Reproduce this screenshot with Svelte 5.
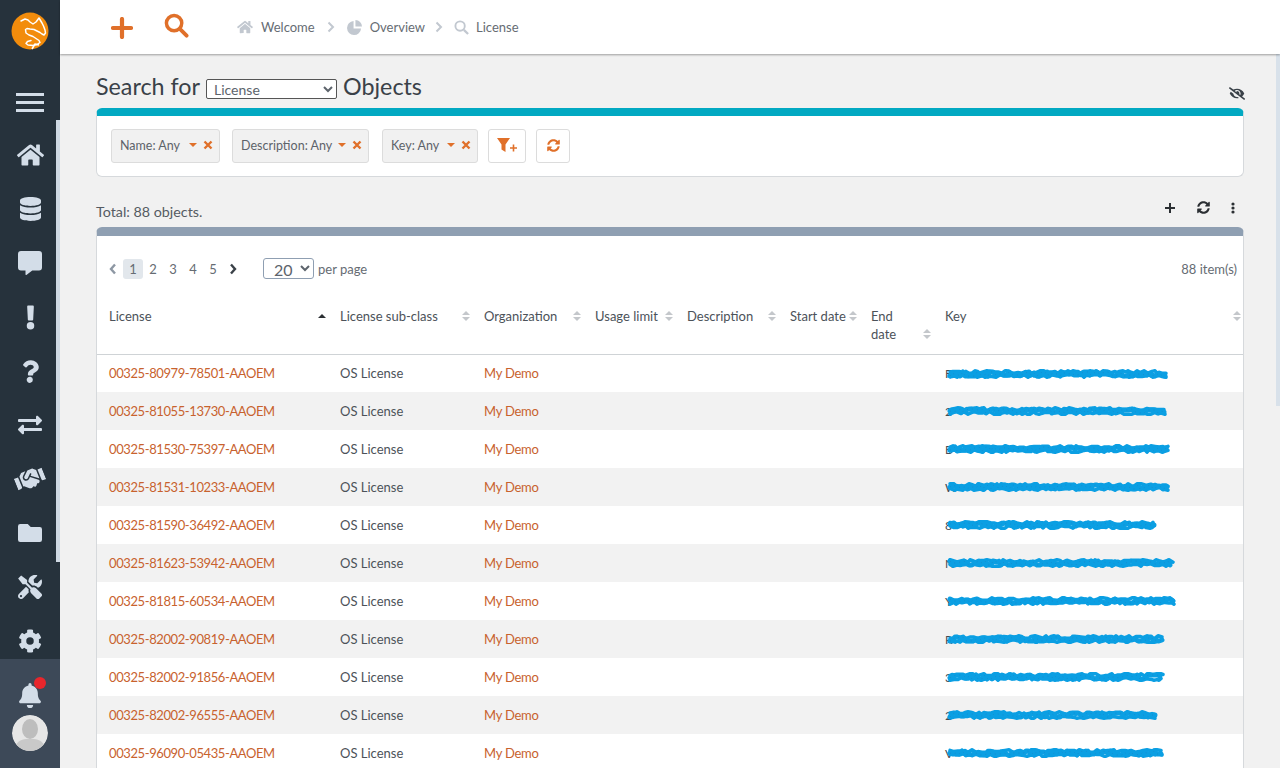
<script>
  const ids = ['00325-80979-78501','00325-81055-13730','00325-81530-75397','00325-81531-10233','00325-81590-36492','00325-81623-53942','00325-81815-60534','00325-82002-90819','00325-82002-91856','00325-82002-96555','00325-96090-05435'];
  const ends = [224,224,227,226,212,231,234,220,221,213,221];
  const firsts = ['F','2','B','W','8','N','Y','R','3','2','V'];
  function scribble(w, seed, base, amp) {
    let s = seed * 7919 + 13, pts = [], x = 5;
    while (x < w - 2) {
      s = (s * 1103515245 + 12345) & 0x7fffffff;
      const y = base + ((s >> 8) % 5 - 2) * amp;
      pts.push(x.toFixed(1) + ',' + y.toFixed(1));
      x += 2 + (s >> 16) % 3;
    }
    return pts.join(' ');
  }
  const rows = ids.map((id, i) => ({
    name: id + '-AAOEM',
    first: firsts[i],
    w: ends[i],
    a: scribble(ends[i], i + 1, 7, 0.6),
    b: scribble(ends[i], i + 31, 11, 0.6),
    c: scribble(ends[i], i + 61, 9, 1)
  }));
  const columns = [
    { label: 'License', sorted: true },
    { label: 'License sub-class' },
    { label: 'Organization' },
    { label: 'Usage limit' },
    { label: 'Description' },
    { label: 'Start date' },
    { label: 'End date' },
    { label: 'Key' }
  ];
</script>

<div class="page">
  <aside class="side">
    <div class="logo">
      <svg viewBox="0 0 38 38" width="38" height="38">
        <circle cx="19" cy="19" r="18.500" fill="#f28c0c" />
        <path d="M10 9 14 7l3 1 2 2 3 2 3-2 3-4 3 5 1.500 3 1.500 4 .5 3-1.500 2-2-1-2-1.500-3-1.500-3-1.500-4-.5-3-.5-1.500 1 .5 3.500 3 2 4 1.500 3 2 3 2 1 2-3 2-4 1-5-.5-2-1.500 1.500-2 3.500-1" fill="none" stroke="#fff" stroke-width="1.500" stroke-linejoin="round" stroke-linecap="round" />
        <path d="m21 37 3-5 4 1" fill="none" stroke="#fff" stroke-width="1.500" stroke-linejoin="round" />
      </svg>
    </div>
    <button class="burger" aria-label="Menu"><span></span><span></span><span></span></button>
    <nav class="nav">
      <svg viewBox="0 0 576 512" width="27" height="24"><path d="M280 148 96 300v164a16 16 0 0 0 16 16l112-.3a16 16 0 0 0 16-16V368a16 16 0 0 1 16-16h64a16 16 0 0 1 16 16v96a16 16 0 0 0 16 16l112 .3a16 16 0 0 0 16-16V300L296 148a12 12 0 0 0-16 0zM572 251l-84-69V44a12 12 0 0 0-12-12h-56a12 12 0 0 0-12 12v72l-89-74a48 48 0 0 0-61 0L4 251a12 12 0 0 0-2 17l26 31a12 12 0 0 0 17 2L280 107a12 12 0 0 1 16 0l235 194a12 12 0 0 0 17-2l26-31a12 12 0 0 0-2-17z"/></svg>
      <svg viewBox="0 0 448 512" width="21" height="24"><path d="M448 73v46c0 40-100 73-224 73S0 159 0 119V73C0 33 100 0 224 0s224 33 224 73zm0 103v103c0 40-100 73-224 73S0 319 0 279V176c48 33 136 49 224 49s176-16 224-49zm0 160v103c0 40-100 73-224 73S0 479 0 439V336c48 33 136 49 224 49s176-16 224-49z"/></svg>
      <svg viewBox="0 0 512 512" width="24" height="24"><path d="M448 0H64A64 64 0 0 0 0 64v288a64 64 0 0 0 64 64h96v84c0 10 11 16 19 10l125-94h144a64 64 0 0 0 64-64V64a64 64 0 0 0-64-64z"/></svg>
      <svg viewBox="0 0 192 512" width="9" height="25"><path d="M176 432a80 80 0 1 1-160 0 80 80 0 0 1 160 0zM25 25l14 272c1 13 11 23 24 23h66c13 0 23-10 24-23l14-272c1-14-10-25-24-25H49C35 0 24 11 25 25z"/></svg>
      <svg viewBox="0 0 384 512" width="17" height="23"><path d="M202 0C122 0 70 33 29 92c-7 11-5 26 5 34l43 33c11 8 26 6 34-4 25-32 44-50 84-50 31 0 70 20 70 50 0 23-19 34-49 51-36 20-83 45-83 107v10c0 13 11 24 24 24h72c13 0 24-11 24-24v-6c0-43 126-45 126-162C379 67 288 0 202 0zm-10 376a70 70 0 1 0 0 136 70 70 0 0 0 0-136z"/></svg>
      <svg viewBox="0 0 512 512" width="24" height="24"><path d="M0 168v-16c0-13 11-24 24-24h360V80c0-21 26-32 41-17l80 80c9 9 9 25 0 34l-80 80c-15 15-41 4-41-17v-48H24c-13 0-24-11-24-24zm488 152H128v-48c0-21-26-32-41-17L7 335c-9 9-9 25 0 34l80 80c15 15 41 4 41-17v-48h360c13 0 24-11 24-24v-16c0-13-11-24-24-24z"/></svg>
      <svg class="hands" viewBox="0 0 640 512" width="30" height="24"><path d="M434.700 64h-85.900c-8 0-15.700 3-21.600 8.400l-98.300 90c-.1.1-.2.3-.3.4-16.600 15.600-16.300 40.500-2.100 56 12.700 13.900 39.400 17.600 56.100 2.700.1-.1.3-.1.4-.2l79.900-73.200c6.500-5.900 16.700-5.500 22.600 1 6 6.500 5.500 16.600-1 22.600l-26.100 23.900L504 313.800c2.900 2.400 5.500 5 7.900 7.700V128l-54.600-54.600c-5.900-6-14.100-9.400-22.600-9.400zM544 128.200v223.900c0 17.700 14.300 32 32 32h64V128.200h-96zM0 384h64c17.700 0 32-14.300 32-32V128.200H0V384zm483.900-45.300L334.600 217.500l-30 27.500c-29.700 27.100-75.200 24.500-101.700-4.400-26.900-29.400-24.800-74.900 4.400-101.700L289.100 64h-83.800c-8.500 0-16.600 3.400-22.600 9.400L128 128v223.900h18.300l90.500 81.900c27.400 22.300 67.700 18.100 90-9.300l.2-.2 17.900 15.500c15.900 13 39.400 10.500 52.300-5.400l31.400-38.600 5.400 4.400c13.700 11.100 33.900 9.100 45-4.700l9.500-11.700c11.200-13.800 9.100-33.900-4.600-45.100z"/></svg>
      <svg viewBox="0 0 512 512" width="24" height="24"><path d="M464 128H272l-64-64H48A48 48 0 0 0 0 112v288a48 48 0 0 0 48 48h416a48 48 0 0 0 48-48V176a48 48 0 0 0-48-48z"/></svg>
      <svg viewBox="0 0 512 512" width="24" height="24"><path d="M502 402 385 285c-23-23-57-28-85-14L194 165V104L67 8 3 72l96 127h62l106 106c-14 28-9 62 14 85l117 117c15 15 38 15 52 0l52-52c14-15 14-38 0-53zM332 224c28 0 55 11 75 31l19 19c16-7 31-16 44-29 37-37 50-90 37-138-2-9-14-12-21-5l-74 74-68-11-11-68 74-74c7-7 3-19-6-21-48-13-101 0-138 37-29 29-42 66-41 104l82 82c9-2 19-1 28-1zm-104 82-57-56L18 403c-24 24-24 63 0 90s66 25 90 1l124-124c-8-20-10-42-4-64zM64 472a24 24 0 1 1 0-48 24 24 0 0 1 0 48z"/></svg>
      <svg viewBox="0 0 512 512" width="24" height="24"><path d="m487 316-42-25c4-23 4-47 0-70l42-25c5-3 7-9 5-14-11-35-30-67-54-93-4-4-10-5-15-3l-42 25c-18-15-38-27-60-35V27c0-5-4-10-9-11-37-8-74-8-108 0-5 1-9 6-9 11v49c-22 8-42 20-60 35L93 86c-5-3-11-2-15 3-24 26-43 58-54 93-2 5 0 11 5 14l42 25c-4 23-4 47 0 70l-42 25c-5 3-7 9-5 14 11 35 30 67 54 93 4 4 10 5 15 3l42-25c18 15 38 27 60 35v49c0 5 4 10 9 11 37 8 74 8 108 0 5-1 9-6 9-11v-49c22-8 42-20 60-35l42 25c5 3 11 2 15-3 24-26 43-58 54-93 2-5 0-11-5-14zM256 336a80 80 0 1 1 0-160 80 80 0 0 1 0 160z"/></svg>
    </nav>
    <div class="foot">
      <div class="bell">
        <svg viewBox="0 0 448 512" width="22" height="25"><path d="M224 512a64 64 0 0 0 64-64H160a64 64 0 0 0 64 64zm215-150c-19-21-55-52-55-154 0-78-54-140-128-155V32a32 32 0 1 0-64 0v21C118 68 64 130 64 208c0 102-36 133-55 154-6 6-9 14-9 22 0 16 13 32 32 32h384c19 0 32-16 32-32 0-8-3-16-9-22z"/></svg>
        <span class="dot"></span>
      </div>
      <div class="avatar">
        <svg viewBox="0 0 36 36" width="36" height="36"><circle cx="18" cy="18" r="18" fill="#e6e6e6"/><ellipse cx="18" cy="14" rx="8" ry="10" fill="#bdbdbd"/><path d="M4 30c3-6 9-6 14-6s11 0 14 6a18 18 0 0 1-28 0z" fill="#c9c9c9"/></svg>
      </div>
    </div>
    <span class="thumb"></span>
  </aside>

  <div class="body">
    <header class="top">
      <div class="actions">
        <svg class="plus" viewBox="0 0 22 22" width="22" height="22"><path d="M11 2v18M2 11h18" stroke="#e0702a" stroke-width="4.200" stroke-linecap="round"/></svg>
        <svg class="lens" viewBox="0 0 26 26" width="25" height="25"><circle cx="10.500" cy="10.500" r="8" fill="none" stroke="#e0702a" stroke-width="3.600"/><path d="m16.500 16.500 7 7" stroke="#e0702a" stroke-width="4" stroke-linecap="round"/></svg>
      </div>
      <div class="crumbs">
        <svg viewBox="0 0 576 512" width="16" height="14"><path d="M280 148 96 300v164a16 16 0 0 0 16 16l112-.3a16 16 0 0 0 16-16V368a16 16 0 0 1 16-16h64a16 16 0 0 1 16 16v96a16 16 0 0 0 16 16l112 .3a16 16 0 0 0 16-16V300L296 148a12 12 0 0 0-16 0zM572 251l-84-69V44a12 12 0 0 0-12-12h-56a12 12 0 0 0-12 12v72l-89-74a48 48 0 0 0-61 0L4 251a12 12 0 0 0-2 17l26 31a12 12 0 0 0 17 2L280 107a12 12 0 0 1 16 0l235 194a12 12 0 0 0 17-2l26-31a12 12 0 0 0-2-17z" fill="#c2c8d0"/></svg>
        <span class="crumb first">Welcome</span>
        <svg class="chev" viewBox="0 0 8 12" width="8" height="12"><path d="m1.500 1.500 4.500 4.500-4.500 4.500" fill="none" stroke="#c2c8d0" stroke-width="2"/></svg>
        <svg viewBox="0 0 16 16" width="15" height="15"><path d="M7 1v8h8A7.500 7.500 0 1 1 7 1z" fill="#c2c8d0"/><path d="M9 0a7 7 0 0 1 7 7H9z" fill="#c2c8d0"/></svg>
        <span class="crumb">Overview</span>
        <svg class="chev last" viewBox="0 0 8 12" width="8" height="12"><path d="m1.500 1.500 4.500 4.500-4.500 4.500" fill="none" stroke="#c2c8d0" stroke-width="2"/></svg>
        <svg viewBox="0 0 16 16" width="15" height="15"><circle cx="6.500" cy="6.500" r="5" fill="none" stroke="#c2c8d0" stroke-width="2"/><path d="m10.500 10.500 4.500 4.500" stroke="#c2c8d0" stroke-width="2.400"/></svg>
        <span class="crumb end">License</span>
      </div>
    </header>

    <main class="main">
      <div class="title">
        <h1>Search for <select class="cls"><option>License</option></select> Objects</h1>
        <svg class="eye" viewBox="0 0 640 512" width="16" height="13"><path d="M320 400c-76 0-137-58-143-132L72 187c-14 17-26 35-37 54a32 32 0 0 0 0 29c54 106 161 178 285 178 27 0 53-4 78-10l-52-40c-9 1-17 2-26 2zm314 58L524 372c33-28 61-63 81-102a32 32 0 0 0 0-29C551 135 444 64 320 64c-52 0-101 13-145 36L45 3a16 16 0 0 0-22 3L3 32a16 16 0 0 0 3 22l588 455a16 16 0 0 0 22-3l20-25a16 16 0 0 0-2-23zM450 316l-39-31c3-9 5-19 5-29a95 95 0 0 0-121-92c6 8 9 17 9 28 0 5-1 10-2 15l-73-56c22-19 60-39 91-39 80 0 144 64 144 144 0 22-5 42-14 60z" fill="#3a4148"/></svg>
      </div>

      <section class="card filter">
        <div class="chip">Name: Any <i class="caret"></i><svg class="x" viewBox="0 0 10 10" width="10" height="10"><path d="m1.500 1.500 7 7m0-7-7 7" stroke="#e0702a" stroke-width="2.400"/></svg></div>
        <div class="chip desc">Description: Any <i class="caret"></i><svg class="x" viewBox="0 0 10 10" width="10" height="10"><path d="m1.500 1.500 7 7m0-7-7 7" stroke="#e0702a" stroke-width="2.400"/></svg></div>
        <div class="chip key">Key: Any <i class="caret"></i><svg class="x" viewBox="0 0 10 10" width="10" height="10"><path d="m1.500 1.500 7 7m0-7-7 7" stroke="#e0702a" stroke-width="2.400"/></svg></div>
        <button class="tool wide" aria-label="Add filter">
          <svg viewBox="0 0 21 15" width="21" height="15"><path d="M0 0h13L8.500 6.500V14L4.500 11.500V6.500z" fill="#e0702a"/><path d="M16.500 6.500v7M13 10h7" stroke="#e0702a" stroke-width="1.600"/></svg>
        </button>
        <button class="tool" aria-label="Refresh">
          <svg viewBox="0 0 512 512" width="13" height="13"><path d="M370 133c-31-29-71-45-114-45-77 0-143 53-162 125-1 5-6 9-12 9H25c-8 0-13-7-12-14C35 88 135 8 256 8c66 0 126 26 171 69l36-36c15-15 41-4 41 17v134c0 13-11 24-24 24H346c-21 0-32-26-17-41zM32 296h134c21 0 32 26 17 41l-42 42c31 29 71 45 114 45 77 0 143-53 162-125 1-5 6-9 12-9h57c8 0 13 7 12 14-22 120-122 200-243 200-66 0-126-26-171-69l-36 36c-15 15-41 4-41-17V320c0-13 11-24 24-24z" fill="#e0702a"/></svg>
        </button>
      </section>

      <div class="total">
        <span>Total: 88 objects.</span>
        <div class="total-icons">
          <svg viewBox="0 0 12 12" width="12" height="12"><path d="M6 1v10M1 6h10" stroke="#2b2f33" stroke-width="2"/></svg>
          <svg viewBox="0 0 512 512" width="13" height="13"><path d="M370 133c-31-29-71-45-114-45-77 0-143 53-162 125-1 5-6 9-12 9H25c-8 0-13-7-12-14C35 88 135 8 256 8c66 0 126 26 171 69l36-36c15-15 41-4 41 17v134c0 13-11 24-24 24H346c-21 0-32-26-17-41zM32 296h134c21 0 32 26 17 41l-42 42c31 29 71 45 114 45 77 0 143-53 162-125 1-5 6-9 12-9h57c8 0 13 7 12 14-22 120-122 200-243 200-66 0-126-26-171-69l-36 36c-15 15-41 4-41-17V320c0-13 11-24 24-24z" fill="#2b2f33"/></svg>
          <svg viewBox="0 0 4 12" width="4" height="12"><circle cx="2" cy="2" r="1.600" fill="#2b2f33"/><circle cx="2" cy="6" r="1.600" fill="#2b2f33"/><circle cx="2" cy="10" r="1.600" fill="#2b2f33"/></svg>
        </div>
      </div>

      <section class="card list">
        <div class="pager">
          <svg class="prev" viewBox="0 0 8 12" width="8" height="12"><path d="M6 1.500 2 6l4 4.500" fill="none" stroke="#8d97a3" stroke-width="2.400"/></svg>
          <span class="pg on">1</span><span class="pg">2</span><span class="pg">3</span><span class="pg">4</span><span class="pg">5</span>
          <svg class="next" viewBox="0 0 8 12" width="8" height="12"><path d="m2 1.500 4 4.500-4 4.500" fill="none" stroke="#3a4148" stroke-width="2.400"/></svg>
          <select class="size"><option>20</option></select>
          <span class="per">per page</span>
          <span class="count">88 item(s)</span>
        </div>
        <table>
          <colgroup>
            <col class="c1" /><col class="c2" /><col class="c3" /><col class="c4" /><col class="c5" /><col class="c6" /><col class="c7" /><col class="c8" />
          </colgroup>
          <thead>
            <tr>
              {#each columns as col}
                <th class:sorted={col.sorted}>{col.label}</th>
              {/each}
            </tr>
          </thead>
          <tbody>
            {#each rows as row}
              <tr>
                <td><span class="link id">{row.name}</span></td>
                <td>OS License</td>
                <td><span class="link">My Demo</span></td>
                <td></td><td></td><td></td><td></td>
                <td class="keycell">
                  <span class="hidden-key">{row.first}</span>
                  <svg class="scr" width={row.w} height="18">
                    <polyline points={row.a} fill="none" stroke="#0b9fe3" stroke-width="3.500" stroke-linejoin="round" stroke-linecap="round"/>
                    <polyline points={row.b} fill="none" stroke="#0b9fe3" stroke-width="3.500" stroke-linejoin="round" stroke-linecap="round"/>
                    <polyline points={row.c} fill="none" stroke="#0b9fe3" stroke-width="5" stroke-linejoin="round" stroke-linecap="round"/>
                    <polyline points={row.c} fill="none" stroke="#1f7fbf" stroke-width="1" stroke-dasharray="1 4" opacity=".55"/>
                  </svg>
                </td>
              </tr>
            {/each}
          </tbody>
        </table>
      </section>
    </main>
  </div>
  <span class="vbar"></span>
</div>

<style>
  :global(body) { margin: 0; overflow: hidden; }
  .page { display: flex; height: 768px; width: 1280px; overflow: hidden; position: relative; font-family: "Lato", "Open Sans", sans-serif; color: #50565d; background: #f1f1f1; }
  svg { display: block; flex: none; }

  .side { position: relative; width: 60px; flex: none; background: #26323c; display: flex; flex-direction: column; align-items: center; height: 768px; }
  .logo { height: 62px; padding-top: 12px; box-sizing: border-box; }
  .burger { width: 28px; height: 19px; margin: 31px 0 16px; padding: 0; border: 0; background: none; display: flex; flex-direction: column; justify-content: space-between; flex: none; }
  .burger span { display: block; height: 3px; background: #d3dde8; }
  .nav { display: grid; grid-auto-rows: 54px; justify-items: center; align-items: center; width: 100%; flex: 1; align-content: start; min-height: 0; }
  .nav svg { fill: #d3dde8; }
  .nav .hands { transform: rotate(-22deg); }
  .foot { height: 109px; flex: none; width: 100%; background: #3d4958; display: flex; flex-direction: column; align-items: center; padding-top: 24px; box-sizing: border-box; gap: 7px; }
  .bell { position: relative; }
  .bell svg { fill: #d3dde8; }
  .dot { position: absolute; top: -6px; right: -5px; width: 12px; height: 12px; border-radius: 50%; background: #e8262c; }
  .avatar { border-radius: 50%; overflow: hidden; }
  .thumb { position: absolute; left: 56px; top: 120px; width: 4px; height: 442px; background: #cfd9e4; }
  .vbar { position: absolute; right: 0; top: 54px; width: 4px; height: 352px; background: #d8e1ea; }

  .body { flex: 1; min-width: 0; display: flex; flex-direction: column; }
  .top { height: 54px; flex: none; background: #fff; box-shadow: 0 1px 2px rgba(0,0,0,.35); display: flex; align-items: center; position: relative; z-index: 1; box-sizing: border-box; padding-left: 51px; }
  .actions { display: flex; align-items: center; gap: 31px; margin-right: 48px; }
  .plus { margin-top: 1px; }
  .lens { margin-top: -4px; }
  .crumbs { display: flex; align-items: center; font-size: 13px; color: #666c73; }
  .crumb { margin-left: 8px; }
  .crumb.first { margin-left: 8px; }
  .crumb.end { margin-left: 7px; }
  .chev { margin: 0 12px; }
  .chev.last { margin: 0 11px 0 10px; }

  .main { flex: 1; padding: 0 36px; min-height: 0; }
  .title { position: relative; height: 54px; display: flex; align-items: flex-start; }
  h1 { margin: 18px 0 0; font-size: 23.300px; line-height: 26px; font-weight: 400; color: #3a4148; display: flex; align-items: center; gap: 6px; }
  .cls { width: 131px; height: 20px; margin: 7px 0 0; font: 14px "Lato", sans-serif; color: #5d646c; background: #fff; border: 1px solid #555; border-radius: 2px; padding: 0 0 0 3px; }
  .eye { position: absolute; right: -1px; top: 33px; }

  .card { background: #fff; border: 1px solid #d6d9dc; border-radius: 6px; box-sizing: border-box; }
  .filter { height: 69px; border-top: 8px solid #02a9c2; display: flex; align-items: center; padding: 0 14px 1px; margin-top: 0; }
  .chip { height: 34px; box-sizing: border-box; background: #f1f1f1; border: 1px solid #dcdcdc; border-radius: 3px; display: flex; align-items: center; padding-left: 8px; font-size: 12.500px; color: #5d636a; width: 109px; margin-right: 12px; white-space: pre; }
  .chip.desc { width: 137px; margin-right: 13px; }
  .chip.key { width: 96px; margin-right: 10px; }
  .caret { margin-left: auto; width: 0; height: 0; border-left: 4px solid transparent; border-right: 4px solid transparent; border-top: 4px solid #e0702a; margin-top: -1px; }
  .x { margin: -2px 6px 0 6px; }
  .tool { height: 34px; width: 34px; box-sizing: border-box; background: #fff; border: 1px solid #dcdcdc; border-radius: 3px; display: flex; align-items: center; justify-content: center; padding: 0; margin-right: 10px; }
  .tool.wide { width: 38px; }

  .total { height: 50px; display: flex; align-items: flex-end; justify-content: space-between; font-size: 14.300px; color: #555b62; box-sizing: border-box; padding-bottom: 7px; }
  .total-icons { display: flex; align-items: center; gap: 21px; margin: 0 9px 6px 0; }

  .list { border-top: 9px solid #8f9fb2; border-bottom: 0; border-radius: 6px 6px 0 0; }
  .pager { height: 61px; display: flex; align-items: center; padding: 4px 6px 0 12px; font-size: 13px; color: #666c73; box-sizing: border-box; }
  .pg { width: 20px; height: 20px; border-radius: 3px; line-height: 20px; text-align: center; }
  .pg.on { background: #e2e7ec; margin-left: 6px; }
  .next { margin-left: 6px; }
  .size { width: 51px; height: 21px; margin-left: 26px; font: 16px "Lato", sans-serif; color: #5d646c; background: #fff; border: 1px solid #8f9fb2; border-radius: 3px; padding: 0 0 0 6px; }
  .per { margin-left: 4px; }
  .count { margin-left: auto; }

  table { width: 100%; table-layout: fixed; border-collapse: collapse; font-size: 13px; }
  .c1 { width: 231px; } .c2 { width: 144px; } .c3 { width: 111px; } .c4 { width: 92px; }
  .c5 { width: 103px; } .c6 { width: 81px; } .c7 { width: 74px; } .c8 { width: auto; }
  th { font-weight: 400; text-align: left; vertical-align: top; padding: 10px 30px 0 12px; height: 57px; box-sizing: border-box; line-height: 18px; border-bottom: 1px solid #cfd3d6; color: #4c5259; position: relative; }
  th::after { content: ""; position: absolute; right: 2px; top: 14px; width: 0; height: 0; border-left: 4px solid transparent; border-right: 4px solid transparent; border-bottom: 4px solid #c4c7cb; }
  th::before { content: ""; position: absolute; right: 2px; top: 20px; width: 0; height: 0; border-left: 4px solid transparent; border-right: 4px solid transparent; border-top: 4px solid #c4c7cb; }
  th.sorted::after { border-bottom-color: #2b2f33; top: 17px; }
  th.sorted::before { display: none; }
  th:nth-child(n+4) { padding-right: 14px; }
  th:nth-child(6) { padding-right: 6px; }
  th:nth-child(7)::after { top: 32px; }
  th:nth-child(7)::before { top: 38px; }
  td { height: 38px; padding: 0 12px; white-space: nowrap; color: #4c5259; box-sizing: border-box; }
  tbody tr:nth-child(even) td { background: #f2f2f2; }
  .link { color: #c8622e; letter-spacing: -.25px; }
  .link.id { letter-spacing: -.4px; }
  .keycell { position: relative; }
  .hidden-key { color: #454b52; font-size: 12px; }
  .scr { position: absolute; left: 12px; top: 10px; }
</style>
